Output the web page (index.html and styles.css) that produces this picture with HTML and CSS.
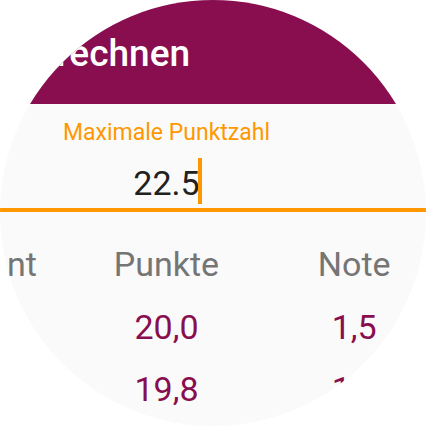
FILE: index.html
```html
<!DOCTYPE html>
<html lang="de">
<head>
<meta charset="utf-8">
<meta name="viewport" content="width=device-width, initial-scale=1">
<title>Noten berechnen</title>
<link rel="stylesheet" href="styles.css">
</head>
<body>
<main class="watch">
  <header class="bar"><h1 class="title">berechnen</h1></header>
  <div class="sheet">
    <div class="field">
      <label class="label" for="points">Maximale Punktzahl</label>
      <div class="entry">
        <input class="value" id="points" type="text" inputmode="decimal" value="22.5">
        <span class="caret"></span>
      </div>
    </div>
    <table class="grades">
      <thead>
        <tr><th>Prozent</th><th>Punkte</th><th>Note</th></tr>
      </thead>
      <tbody>
        <tr><td></td><td>20,0</td><td>1,5</td></tr>
        <tr><td></td><td>19,8</td><td>1,6</td></tr>
      </tbody>
    </table>
  </div>
</main>
</body>
</html>
```

FILE: styles.css
```css
* { box-sizing: border-box; }

body {
  margin: 0;
  background: #fff;
  font-family: Roboto, sans-serif;
}

/* Round watch face that crops everything inside it */
.watch {
  width: 100vmin;
  aspect-ratio: 1;
  margin: 0 auto;
  overflow: hidden;
  clip-path: circle(50%);
  background: #fafafa;
}

.bar {
  display: flex;
  align-items: center;
  height: 104px;
  padding: 4px 0 0 16px;
  background: #880e4f;
}

.title {
  margin: 0;
  color: #fff;
  font-size: 37px;
  font-weight: 500;
  line-height: 44px;
}

/* The sheet is wider than the face on both sides */
.sheet { margin: 0 -22px 0 -115px; }

.field {
  padding-top: 14px;
  border-bottom: 4px solid #ff9800;
  text-align: center;
}

.label {
  display: block;
  color: #ff9800;
  font-size: 23px;
  line-height: 30px;
}

.entry {
  position: relative;
  padding: 12px 0 2px;
}

.value {
  display: block;
  width: 100%;
  height: 46px;
  padding: 0;
  border: 0;
  outline: 0;
  background: none;
  color: #212121;
  font: inherit;
  font-size: 34px;
  text-align: center;
}

.caret {
  position: absolute;
  top: 10px;
  left: calc(50% + 31px);
  width: 4px;
  height: 46px;
  background: #ff9800;
}

.grades {
  width: 100%;
  margin-top: 21px;
  border-collapse: collapse;
  table-layout: fixed;
  font-size: 34px;
  line-height: 62px;
  text-align: center;
}

.grades th {
  padding: 0 0 1px;
  color: #757575;
  font-weight: 400;
}

.grades td {
  padding: 0;
  color: #880e4f;
}
```
